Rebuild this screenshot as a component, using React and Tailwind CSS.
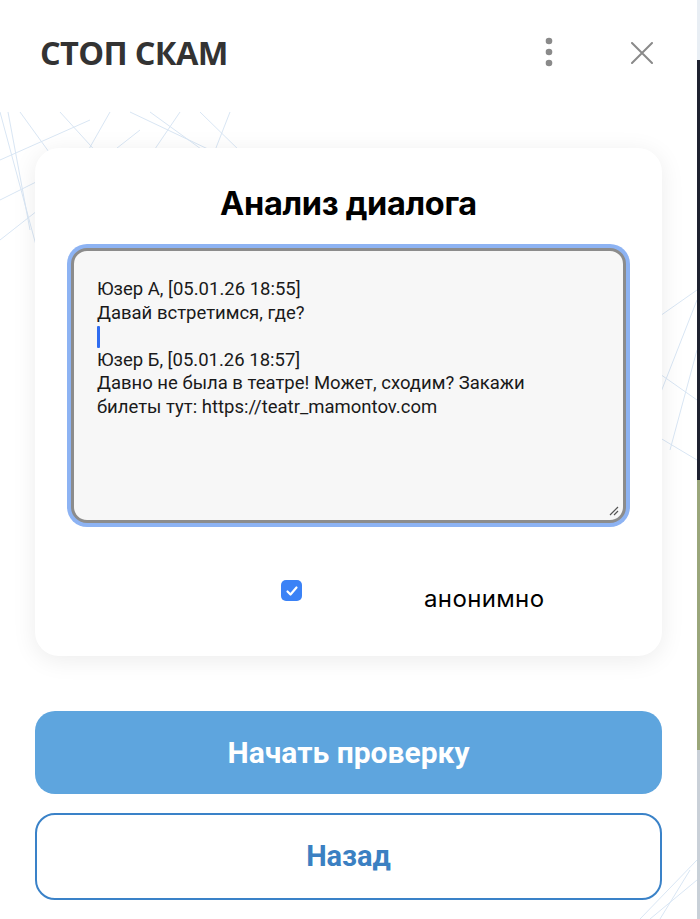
import React from 'react';

const lines = [
  'Юзер А, [05.01.26 18:55]',
  'Давай встретимся, где?',
];
const lines2 = [
  'Юзер Б, [05.01.26 18:57]',
  'Давно не была в театре! Может, сходим? Закажи',
  'билеты тут: https://teatr_mamontov.com',
];

function Pattern() {
  // faint polygon mesh behind the popup
  return (
    <svg className="absolute inset-0 w-full h-full pointer-events-none" viewBox="0 0 697 919" preserveAspectRatio="none">
      <g stroke="#d9e6f4" strokeWidth="1" fill="none">
        <path d="M0 112 L40 260 M8 112 L30 230 M20 112 L120 250 M60 112 L140 200 M110 112 L60 200 M130 112 L210 150 M150 112 L230 170 M180 112 L100 230 M200 112 L290 200 M230 112 L180 240 M0 160 L90 120 M0 200 L60 170 M0 240 L140 130" />
        <path d="M640 330 L697 290 M660 300 L630 440 M697 300 L650 420 M630 420 L697 460 M640 360 L697 400 M697 350 L670 450" />
        <path d="M640 919 L697 860 M660 919 L690 870 M697 880 L650 919" />
      </g>
    </svg>
  );
}

function Kebab() {
  return (
    <svg width="10" height="30" viewBox="0 0 10 30">
      <circle cx="5" cy="4" r="3.3" fill="#8a8a8a" />
      <circle cx="5" cy="15" r="3.3" fill="#8a8a8a" />
      <circle cx="5" cy="26" r="3.3" fill="#8a8a8a" />
    </svg>
  );
}

function CloseIcon() {
  return (
    <svg width="22" height="22" viewBox="0 0 22 22">
      <path d="M1 1 L21 21 M21 1 L1 21" stroke="#8a8a8a" strokeWidth="2" strokeLinecap="round" />
    </svg>
  );
}

export default function App() {
  return (
    <div className="flex w-[700px] h-[919px] bg-white overflow-hidden">
      <div className="relative flex-1 bg-white rounded-tr-[12px] overflow-hidden">
        <Pattern />
        <div className="relative flex flex-col">
          {/* header */}
          <div className="flex items-center h-[106px] pl-[40px] pr-[44px]">
            <span className="flex-1 text-[32.5px] font-bold text-[#333] tracking-[-0.02em] font-['Open_Sans',sans-serif]">
              СТОП СКАМ
            </span>
            <div className="mr-[77px] mt-[-2px]"><Kebab /></div>
            <CloseIcon />
          </div>

          {/* card */}
          <div className="mt-[42px] mx-[35px] h-[508px] rounded-[24px] bg-white shadow-[0_4px_24px_rgba(0,0,0,0.08)] flex flex-col items-center pt-[36px]">
            <h1 className="text-[32.5px] leading-[40px] font-bold text-black font-['Inter',sans-serif] tracking-[-0.01em]">Анализ диалога</h1>
            <div className="mt-[20px] w-[563px] h-[283px] rounded-[20px] bg-[#8db3f3] p-[4px]">
              <div className="relative w-full h-full rounded-[16px] border-[3px] border-[#8c8c8c] bg-[#f7f7f7] pl-[23px] pt-[27px] text-[18.5px] leading-[23.5px] text-[#1a1a1a] font-['Roboto',sans-serif]">
                {lines.map((l) => <div key={l}>{l}</div>)}
                <div className="h-[23.5px] flex items-center"><span className="w-[3px] h-[22px] rounded-[1px] bg-[#2f6cf0]" /></div>
                {lines2.map((l) => <div key={l}>{l}</div>)}
                <svg className="absolute right-[4px] bottom-[4px]" width="12" height="12" viewBox="0 0 12 12">
                  <path d="M11 3 L3 11 M11 7 L7 11" stroke="#555" strokeWidth="1.2" />
                </svg>
              </div>
            </div>
            <div className="mt-[53px] flex items-start w-full">
              <div className="ml-[246px] w-[21px] h-[21px] rounded-[5px] bg-[#3b82f6] flex items-center justify-center">
                <svg width="14" height="14" viewBox="0 0 14 14">
                  <path d="M2.5 7.5 L5.5 10.5 L11.5 3.5" stroke="white" strokeWidth="2.2" fill="none" strokeLinecap="round" strokeLinejoin="round" />
                </svg>
              </div>
              <span className="ml-[122px] mt-[4px] text-[24px] leading-[30px] tracking-[0.015em] text-black font-['Inter',sans-serif]">анонимно</span>
            </div>
          </div>

          {/* buttons */}
          <button className="mt-[55px] mx-[35px] h-[83px] rounded-[20px] bg-[#5ea5de] text-white text-[30px] font-bold font-['Roboto',sans-serif]">
            Начать проверку
          </button>
          <button className="mt-[19px] mx-[35px] h-[87px] rounded-[20px] border-2 border-[#3a82c8] bg-white text-[#3b80c2] text-[29px] font-bold font-['Roboto',sans-serif]">
            Назад
          </button>
        </div>
      </div>
      <div className="w-[3px] flex flex-col">
        <div className="h-[60px] bg-[#e8eef4]" />
        <div className="h-[420px] bg-[#1e2230]" />
        <div className="h-[270px] bg-[#9aa67a]" />
        <div className="flex-1 bg-[#c9d0d8]" />
      </div>
    </div>
  );
}
